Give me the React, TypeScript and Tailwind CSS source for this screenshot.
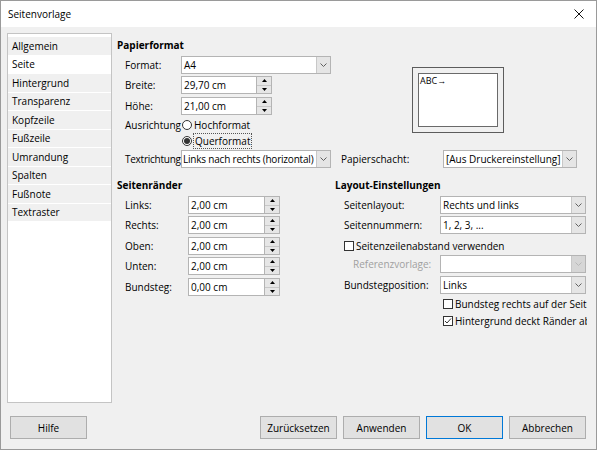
import React from "react";

const PAGES = ["Allgemein", "Seite", "Hintergrund", "Transparenz", "Kopfzeile", "Fußzeile", "Umrandung", "Spalten", "Fußnote", "Textraster"];

function Chevron({ disabled }: { disabled?: boolean }) {
  return (
    <svg width="7" height="4" viewBox="0 0 7 4">
      <polyline points="0.5,0.5 3.5,3.5 6.5,0.5" fill="none" stroke={disabled ? "#b8b8b8" : "#606060"} strokeWidth="1" />
    </svg>
  );
}

function Combo({ value, className, disabled, tight }: { value?: string; className: string; disabled?: boolean; tight?: boolean }) {
  return (
    <div className={`flex h-[18px] shrink-0 border border-[#b4b4b4] bg-white ${className}`}>
      <div className={`flex-1 min-w-0 flex items-center whitespace-nowrap overflow-hidden ${tight ? "pl-[1px] tracking-[-0.2px]" : "pl-[2px]"}`}>{value}</div>
      <div className={`w-[14px] flex items-center justify-center border-l border-[#c8c8c8] ${disabled ? "bg-[#d6d6d6]" : "bg-[#e5e5e5]"}`}>
        <Chevron disabled={disabled} />
      </div>
    </div>
  );
}

function Spin({ value, className }: { value: string; className: string }) {
  return (
    <div className={`flex h-[18px] shrink-0 ${className}`}>
      <div className="flex-1 flex items-center pl-[2px] bg-white border border-[#b4b4b4]">{value}</div>
      <div className="w-[15px] flex flex-col border border-l-0 border-[#b4b4b4] bg-[#e6e6e6]">
        <div className="flex-1 flex items-center justify-center border-b border-[#c8c8c8]">
          <svg width="5" height="3" viewBox="0 0 5 3"><polygon points="2.5,0 5,3 0,3" fill="#000" /></svg>
        </div>
        <div className="flex-1 flex items-center justify-center">
          <svg width="5" height="3" viewBox="0 0 5 3"><polygon points="0,0 5,0 2.5,3" fill="#000" /></svg>
        </div>
      </div>
    </div>
  );
}

function Radio({ checked }: { checked?: boolean }) {
  return (
    <span className="w-[10px] h-[10px] shrink-0 rounded-full border border-[#333] bg-white flex items-center justify-center">
      {checked && <span className="w-[6px] h-[6px] rounded-full bg-[#333]" />}
    </span>
  );
}

function Check({ checked }: { checked?: boolean }) {
  return (
    <span className="w-[10px] h-[10px] shrink-0 border border-[#333] bg-white flex items-center justify-center">
      {checked && (
        <svg width="8" height="8" viewBox="0 0 8 8">
          <polyline points="1,4 3,6 7,1.5" fill="none" stroke="#333" strokeWidth="1" />
        </svg>
      )}
    </span>
  );
}

function Btn({ label, primary }: { label: string; primary?: boolean }) {
  return (
    <div className={`w-[77px] h-[23px] flex items-center justify-center bg-[#e1e1e1] border ${primary ? "border-[#0078d7]" : "border-[#adadad]"}`}>
      {label}
    </div>
  );
}

export default function App() {
  return (
    <div className="w-[597px] h-[450px] flex flex-col bg-[#f0f0f0] border border-[#9a9a9a] text-[10px] leading-none text-black font-['Open_Sans',sans-serif] overflow-hidden">
      {/* title bar */}
      <div className="h-[26px] shrink-0 bg-white flex items-center pl-[7px] pr-[12px]">
        <span className="flex-1">Seitenvorlage</span>
        <svg width="10" height="10" viewBox="0 0 10 10">
          <path d="M0.5 0.5 L9.5 9.5 M9.5 0.5 L0.5 9.5" stroke="#111" strokeWidth="1" />
        </svg>
      </div>

      <div className="h-[376px] shrink-0 flex pt-[6px] pl-[6px]">
        {/* page list */}
        <div className="w-[105px] h-[370px] shrink-0 bg-white border border-[#c4c4c4] pt-[3px]">
          {PAGES.map(p => (
            <div key={p} className={`h-[18.5px] flex items-center pl-[4px] border-b border-white ${p === "Seite" ? "bg-white" : "bg-[#f0f0f0]"}`}>
              {p}
            </div>
          ))}
        </div>

        {/* tab content */}
        <div className="w-[475px] shrink-0 overflow-hidden pl-[5px]">
          <div className="mt-[4px] h-[16px] flex items-center font-bold">Papierformat</div>

          <div className="mt-[3px] flex">
            <div className="w-[214px] shrink-0">
              <div className="h-[18px] flex items-center pl-[8px]">
                <span className="w-[56px] shrink-0">Format:</span>
                <Combo value="A4" className="w-[150px]" />
              </div>
              <div className="mt-[2px] h-[18px] flex items-center pl-[8px]">
                <span className="w-[56px] shrink-0">Breite:</span>
                <Spin value="29,70 cm" className="w-[91px]" />
              </div>
              <div className="mt-[3px] h-[18px] flex items-center pl-[8px]">
                <span className="w-[56px] shrink-0">Höhe:</span>
                <Spin value="21,00 cm" className="w-[91px]" />
              </div>
              <div className="mt-[2px] h-[16px] flex items-center pl-[8px]">
                <span className="w-[56px] shrink-0 whitespace-nowrap">Ausrichtung</span>
                <span className="ml-[1px]"><Radio /></span>
                <span className="ml-[2px]">Hochformat</span>
              </div>
              <div className="h-[16px] flex items-center pl-[65px]">
                <Radio checked />
                <span className="ml-[1px] h-[16px] flex items-center px-[1px] border border-dotted border-[#555]">Querformat</span>
              </div>
            </div>
            <div className="ml-[81px] mt-[11px] w-[92px] h-[66px] shrink-0 border border-[#5c5c5c] p-[5px]">
              <div className="w-full h-full bg-white border border-[#6a6a6a] text-[9px] pl-[1px] pt-[2px]">ABC→</div>
            </div>
          </div>

          <div className="mt-[1px] h-[18px] flex items-center pl-[8px]">
            <span className="w-[56px] shrink-0 whitespace-nowrap tracking-[-0.25px]">Textrichtung</span>
            <Combo value="Links nach rechts (horizontal)" className="w-[150px]" tight />
            <span className="ml-[10px] w-[102px] shrink-0">Papierschacht:</span>
            <Combo value="[Aus Druckereinstellung]" className="w-[134px]" />
          </div>

          <div className="mt-[9px] flex">
            {/* margins */}
            <div className="w-[218px] shrink-0">
              <div className="h-[16px] flex items-center font-bold">Seitenränder</div>
              {[
                ["Links:", "2,00 cm", "mt-[3px]"],
                ["Rechts:", "2,00 cm", "mt-[2px]"],
                ["Oben:", "2,00 cm", "mt-[3px]"],
                ["Unten:", "2,00 cm", "mt-[2px]"],
                ["Bundsteg:", "0,00 cm", "mt-[3px]"],
              ].map(([l, v, m]) => (
                <div key={l} className={`${m} h-[18px] flex items-center pl-[8px]`}>
                  <span className="w-[63px] shrink-0">{l}</span>
                  <Spin value={v} className="w-[92px]" />
                </div>
              ))}
            </div>

            {/* layout settings */}
            <div className="w-[252px] shrink-0 whitespace-nowrap">
              <div className="h-[16px] flex items-center font-bold">Layout-Einstellungen</div>
              <div className="mt-[3px] h-[18px] flex items-center pl-[9px]">
                <span className="w-[96px] shrink-0">Seitenlayout:</span>
                <Combo value="Rechts und links" className="w-[146px]" />
              </div>
              <div className="mt-[2px] h-[18px] flex items-center pl-[9px]">
                <span className="w-[96px] shrink-0">Seitennummern:</span>
                <Combo value="1, 2, 3, ..." className="w-[146px]" />
              </div>
              <div className="mt-[3px] h-[18px] flex items-center pl-[9px] gap-[2px]">
                <Check />
                <span>Seitenzeilenabstand verwenden</span>
              </div>
              <div className="h-[18px] flex items-center pl-[9px]">
                <span className="w-[96px] shrink-0 pl-[9px] text-[#a0a0a0]">Referenzvorlage:</span>
                <Combo className="w-[146px]" disabled />
              </div>
              <div className="mt-[3px] h-[18px] flex items-center pl-[9px]">
                <span className="w-[96px] shrink-0">Bundstegposition:</span>
                <Combo value="Links" className="w-[146px]" />
              </div>
              <div className="mt-[2px] h-[16px] flex items-center pl-[108px] gap-[2px]">
                <Check />
                <span>Bundsteg rechts auf der Seite</span>
              </div>
              <div className="mt-[1px] h-[16px] flex items-center pl-[108px] gap-[2px]">
                <Check checked />
                <span>Hintergrund deckt Ränder ab</span>
              </div>
            </div>
          </div>
        </div>
      </div>

      {/* buttons */}
      <div className="flex pt-[13px] pl-[9px] pr-[10px]">
        <Btn label="Hilfe" />
        <div className="flex-1" />
        <div className="flex gap-[6px]">
          <Btn label="Zurücksetzen" />
          <Btn label="Anwenden" />
          <Btn label="OK" primary />
          <Btn label="Abbrechen" />
        </div>
      </div>
    </div>
  );
}
